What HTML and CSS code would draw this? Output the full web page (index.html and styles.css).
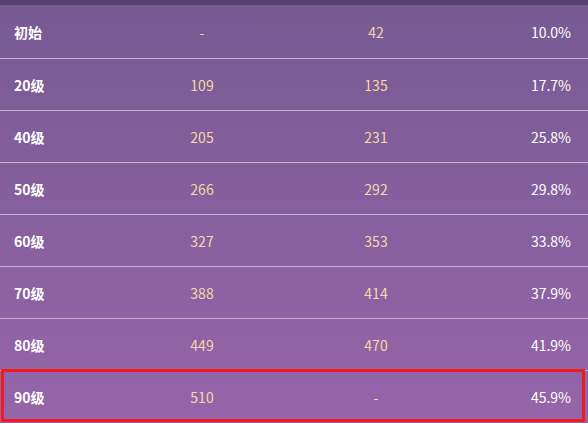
FILE: index.html
```
<!DOCTYPE html>
<html lang="zh-CN">
<head>
  <meta charset="UTF-8">
  <title>突破加成</title>
  <link rel="stylesheet" href="styles.css">
</head>
<body>
  <div class="table">
    <div class="row">
      <div class="cell level">初始</div>
      <div class="cell num">-</div>
      <div class="cell num">42</div>
      <div class="cell pct">10.0%</div>
    </div>
    <div class="row">
      <div class="cell level">20级</div>
      <div class="cell num">109</div>
      <div class="cell num">135</div>
      <div class="cell pct">17.7%</div>
    </div>
    <div class="row">
      <div class="cell level">40级</div>
      <div class="cell num">205</div>
      <div class="cell num">231</div>
      <div class="cell pct">25.8%</div>
    </div>
    <div class="row">
      <div class="cell level">50级</div>
      <div class="cell num">266</div>
      <div class="cell num">292</div>
      <div class="cell pct">29.8%</div>
    </div>
    <div class="row">
      <div class="cell level">60级</div>
      <div class="cell num">327</div>
      <div class="cell num">353</div>
      <div class="cell pct">33.8%</div>
    </div>
    <div class="row">
      <div class="cell level">70级</div>
      <div class="cell num">388</div>
      <div class="cell num">414</div>
      <div class="cell pct">37.9%</div>
    </div>
    <div class="row">
      <div class="cell level">80级</div>
      <div class="cell num">449</div>
      <div class="cell num">470</div>
      <div class="cell pct">41.9%</div>
    </div>
    <div class="row last">
      <div class="cell level">90级</div>
      <div class="cell num">510</div>
      <div class="cell num">-</div>
      <div class="cell pct">45.9%</div>
      <div class="mark"></div>
    </div>
  </div>
</body>
</html>
```

FILE: styles.css
```
/* 기본 */
body {
  margin: 0;
  font-family: "Noto Sans CJK SC", "Noto Sans", sans-serif;
  font-size: 14px;
}

/* 표 */
.table {
  height: 423px;
  border-top: 5px solid #56406e;
  box-sizing: border-box;
  background: linear-gradient(#785a93, #9565a9);
}
.row {
  display: grid;
  grid-template-columns: 115px 174px 174px 1fr;
  align-items: center;
  height: 51px;
  border-bottom: 1px solid #c6b2d3;
}
.row:first-child {
  height: 53px;
}
.row.last {
  position: relative;
  border-bottom: none;
}
.cell.level {
  padding-left: 14px;
  color: #fff;
  font-weight: bold;
}
.cell.num {
  text-align: center;
  color: #f4d9a8;
}
.cell.pct {
  text-align: right;
  padding-right: 17px;
  color: #fff;
}

/* 강조 테두리 */
.mark {
  position: absolute;
  left: 1px;
  right: 3px;
  top: -2px;
  bottom: 0;
  border: 3px solid #f21b1b;
}
```
